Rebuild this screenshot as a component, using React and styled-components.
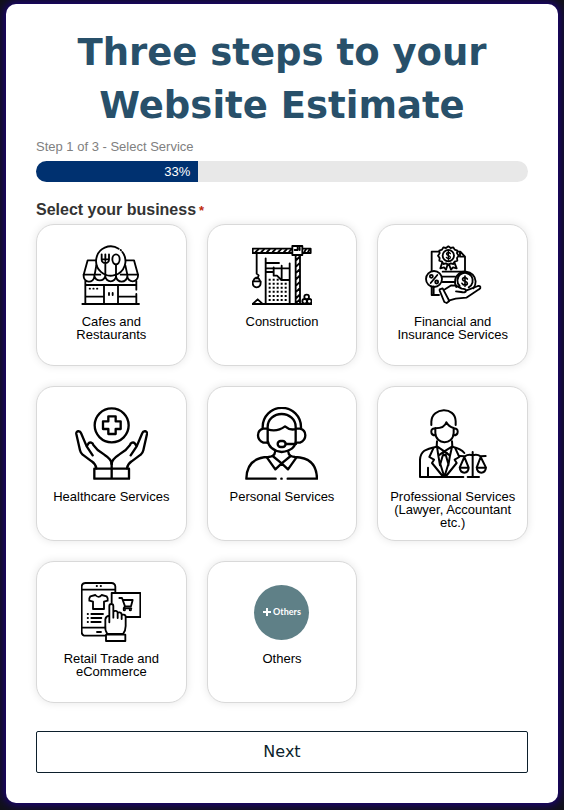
import React, { useState } from "react";
import styled, { createGlobalStyle } from "styled-components";

const GlobalStyle = createGlobalStyle`
  *, *::before, *::after { box-sizing: border-box; }
  body {
    margin: 0;
    background: #111118;
    font-family: "Liberation Sans", Arial, sans-serif;
    font-size: 13px;
    color: #000;
  }
`;

const Page = styled.main`
  display: flow-root;
  padding: 4px 6px 7px;
  overflow: hidden;
`;

const Panel = styled.form`
  padding: 22px 30px 30px;
  border-radius: 10px;
  background: #fff;
  box-shadow: 0 0 10px 2px #1c0080;
`;

const Title = styled.h1`
  margin: 0 0 7px;
  font: bold 37px/53px "DejaVu Sans", Verdana, sans-serif;
  text-align: center;
  color: #28506a;
`;

const StepText = styled.p`
  margin: 0 0 6px;
  line-height: 16px;
  color: #808080;
`;

const Track = styled.div`
  display: flex;
  margin-bottom: 18px;
  border-radius: 11px;
  overflow: hidden;
  background: #e8e8e8;
`;

const Fill = styled.div`
  padding-right: 8px;
  line-height: 21px;
  text-align: right;
  color: #fff;
  background: #003170;
`;

const Fieldset = styled.fieldset`
  margin: 0 0 28px;
  padding: 0;
  border: 0;
  min-width: 0;
`;

const Legend = styled.legend`
  padding: 0 0 3px;
  font-size: 16px;
  line-height: 20px;
  font-weight: bold;
  color: #333;
`;

const Required = styled.span`
  margin-left: 3px;
  font-size: 13px;
  color: #c02b0a;
`;

const Choices = styled.div`
  display: grid;
  grid-template-columns: repeat(3, minmax(0, 1fr));
  gap: 20px;
`;

const Choice = styled.label`
  position: relative;
  display: flex;
  flex-direction: column;
  align-items: center;
  gap: 10px;
  min-height: 142px;
  padding: 20px 10px 11px;
  border: 1px solid #d9d9d9;
  border-radius: 18px;
  background: #fff;
  box-shadow: 0 0 8px rgba(0, 0, 0, 0.1);
  line-height: 13px;
  text-align: center;
  cursor: pointer;
  &:has(:checked) { border-color: #003170; }
  &:has(:focus-visible) { outline: 2px solid #003170; }
`;

const Radio = styled.input`
  position: absolute;
  inset: 0;
  width: 100%;
  height: 100%;
  margin: 0;
  opacity: 0;
  cursor: pointer;
`;

const Drawing = styled.svg`
  flex: none;
  width: ${(p) => p.$size}px;
  height: ${(p) => p.$size}px;
  fill: none;
  stroke: #000;
  stroke-width: ${(p) => p.$stroke};
  stroke-linecap: round;
  stroke-linejoin: round;
`;

const Slot = styled.span`
  display: grid;
  place-items: center;
  height: 60px;
`;

const Disc = styled.span`
  display: flex;
  align-items: center;
  justify-content: center;
  gap: 2px;
  width: 55px;
  height: 55px;
  border-radius: 50%;
  background: #5f8087;
  color: #fff;
  font: bold 9px/12px Lato, sans-serif;
`;

const Plus = styled.svg`
  width: 8px;
  height: 8px;
  stroke: #fff;
  stroke-width: 2;
`;

const Next = styled.button`
  display: block;
  width: 100%;
  padding: 10px;
  border: 1px solid #0c1f2c;
  border-radius: 2px;
  background: #fff;
  color: #0c1f2c;
  font: 16px/20px "DejaVu Sans", Verdana, sans-serif;
  cursor: pointer;
`;

const CafeIcon = () => (
  <Drawing $size={60} $stroke={5.5} viewBox="34 27 180 180" aria-hidden="true">
    <path d="M147 38A44 44 0 1 0 158 48M153 42l1 1" />
    <path d="M79 73H54L42 116M168 73h25l12 43M80 88l-5 28M167 88l6 28M42 116H92M153 116H205" />
    <path d="M42 116v4a16 16 0 0 0 32 2v-5M74 120a17 17 0 0 0 33 0v-5M107 120a16 16 0 0 0 32 0v-5M139 120a17 17 0 0 0 34 0v-4M173 120a16 16 0 0 0 32 0v-4" />
    <path d="M107 116V78M96 55v16a11 10 0 0 0 22 0V55M107 55v18M96 70h22M139 116V86" />
    <ellipse cx="139" cy="70" rx="11" ry="15" />
    <path d="M47 136v67M200 136v25M200 174v29M47 147h153M103 149v54M145 149v54M49 182h52M147 182h51M38 204h170" />
    <path d="M60 158h1M71 158h1M82 158h1M118 171v6M129 171v6" />
  </Drawing>
);

const CraneIcon = () => (
  <Drawing $size={60} $stroke={5.5} viewBox="37 27 180 180" aria-hidden="true">
    <path d="M158 38H39v13h119M188 38h25v13h-25M158 30h30v27h-30zM174 30v12h-9M180 35v7" />
    <path d="M48 48l8-8M65 48l8-8M82 48l8-8M99 48l8-8M116 48l8-8M133 48l8-8M148 48l7-8M194 48l5-8M205 48l5-8" />
    <path d="M51 52v61l6 5-2 6-6 1M40 136l5-9h12l5 9M39 136h24q1 18-12 18t-12-18z" />
    <path d="M78 67v136M150 82v121M78 81h40M78 97h72M80 108h20M102 94v25h10l13 13h25M126 89v42" />
    <path d="M168 58v145M181 58v145M170 72l9-9M170 91l9-9M170 110l9-9M170 129l9-9M170 148l9-9M170 167l9-9M170 186l9-9M170 200l9-8" />
    <path d="M38 204h177M40 203l14-13 14 13" />
    <circle cx="201" cy="183" r="7" />
    <circle cx="195" cy="196" r="7" />
    <circle cx="209" cy="196" r="7" />
    <path strokeWidth="6" strokeLinecap="butt" strokeDasharray="6 6" d="M87 131h30M87 143h56M87 155h56M87 167h56M87 180h56M87 192h56" />
  </Drawing>
);

const FinanceIcon = () => (
  <Drawing $size={60} $stroke={5.5} viewBox="33 27 180 180" aria-hidden="true">
    <path d="M80 47H59v58M59 151v26h22M138 47h7l14 15v41M144 48v14h14M92 107h69M92 122h37M92 138h37M65 151v26" />
    <path d="M109 31l7 5 8-2 4 7 8 3-1 8 5 7-5 7 1 8-8 3-4 7-8-2-7 5-7-5-8 2-4-7-8-3 1-8-5-7 5-7-1-8 8-3 4-7 8 2z" />
    <circle cx="109" cy="59" r="17" />
    <path strokeWidth="4" d="M115 53c-4-6-13-3-11 2s11 3 11 9-10 5-12 0M109 46v27" />
    <path d="M91 79l-6 18 11-3 6 7 5-16M127 79l7 18-11-3-6 7-6-16" />
    <circle cx="66" cy="129" r="24" />
    <path d="M76 117l-20 24" />
    <circle cx="58" cy="121" r="4.5" />
    <circle cx="74" cy="138" r="4.5" />
    <path d="M133 153a31 31 0 1 1 51 4M143 150a23 23 0 1 1 27 4" />
    <path strokeWidth="5" d="M166 129c-5-8-16-4-14 2s14 4 14 11-12 7-16 0M159 120v31" />
    <path d="M83 160l9-3 20 38-8 6-7-3-14-34zM99 160l19-12 14 1 17 9q14 1 13 7t-15 3l-15-2M162 164l36-14c8-2 10 6 3 10l-38 25-32 3-21 6" />
  </Drawing>
);

const HealthIcon = () => (
  <Drawing $size={73} $stroke={7} viewBox="14 21 219 219" aria-hidden="true">
    <circle cx="124" cy="76" r="51" />
    <path d="M114 49h22v15h15v23h-15v15h-22V87H98V64h16z" />
    <path d="M72 206h104v30H72zM124 184v52" />
    <path d="M78 205Q76 192 64 184L37 164Q31 160 29 151L18 102C16 92 29 91 32 99L49 139 67 166M49 139L54 131C58 124 68 129 69 135L82 150 102 164Q124 178 124 192" />
    <path d="M170 205Q172 192 184 184L211 164Q217 160 219 151L230 102C232 92 219 91 216 99L199 139 181 166M199 139L194 131C190 124 180 129 179 135L166 150 146 164Q124 178 124 192" />
  </Drawing>
);

const HeadsetIcon = () => (
  <Drawing $size={73} $stroke={7} viewBox="17 21 219 219" aria-hidden="true">
    <path d="M70 84v-3a57 57 0 0 1 115 0v3M85 129V80a42 38 0 0 1 84 0v42q-1 29-42 34-38-5-42-34M85 88q28 9 52-9 15 13 32 8" />
    <path d="M82 86H72q-16 4-16 20t16 22h11M171 86h11q16 4 16 20t-16 22h-11M139 132h31" />
    <rect x="115" y="123" width="24" height="18" rx="9" />
    <path d="M21 236c1-44 25-64 66-65q19-1 20-15M233 236c-1-44-25-64-66-65q-19-1-20-15M21 236h88M145 236h88M126 236h1" />
    <path d="M100 168l27 22-19 18-25-35M154 168l-27 22 19 18 25-35" />
  </Drawing>
);

const LawyerIcon = () => (
  <Drawing $size={73} $stroke={6} viewBox="13 19 219 219" aria-hidden="true">
    <path d="M59 73V63c2-44 72-47 73-1v11M71 82v15c1 36 53 38 55 0V82M71 83c17 0 30-7 33-18q7 13 22 17" />
    <path d="M70 84c-15-3-15 20 1 20M127 84c15-3 15 20-1 20M76 122l-1 15M121 122l1 15" />
    <path d="M25 229v-52c2-26 16-32 50-39M122 138c18 4 28 8 36 19M25 229h130M49 201v28M168 229h34" />
    <path d="M65 143l-12 26 14 8-6 10 34 42M131 143l12 26-14 8 6 10-34 42M76 138l4 27 18-13 17 13 6-27M76 137l22 15 24-15M92 157l6 7 8-7M93 165l-7 25 12 39 12-39-7-25M80 165l5 29M115 165l-5 29" />
    <path d="M183 154v75M144 166l15 1q12-8 24-3 13-5 24 3l15-1M158 169l-14 32h27zM207 169l-12 32h28zM144 201q2 15 14 15t13-15M195 201q2 15 14 15t14-15" />
  </Drawing>
);

const ShopIcon = () => (
  <Drawing $size={60} $stroke={5.5} viewBox="34 30 180 180" aria-hidden="true">
    <path d="M137 61V44q-1-11-12-11H48q-12 0-12 12v134q0 12 12 12h58M38 53h98M38 167h67M81 42h1M93 42h1M82 180h12" />
    <path d="M77 69L62 73Q57 79 59 86L70 89V111H103V89L114 86Q116 79 111 73L96 69Q87 80 77 69Z" />
    <path d="M54 126h1M65 126h35M54 138h1M65 138h30M54 150h1M65 150h28" />
    <path d="M126 92V63h86v72h-42" />
    <path d="M149 78H157L166 103H184L189 84H160M166 103L162 109H185" />
    <circle cx="164" cy="113" r="2" />
    <circle cx="182" cy="113" r="2" />
    <path d="M119 151v-49c0-8 12-8 12 0v35-15c0-8 13-6 13 1v15-12c0-8 12-6 12 2v13-9c0-7 12-5 12 2v28q0 14-8 24h-47q-8-13-6-27v-17q1-9 12-11M109 188h58v19h-58z" />
  </Drawing>
);

const OthersIcon = () => (
  <Slot aria-hidden="true">
    <Disc>
      <Plus viewBox="0 0 8 8"><path d="M0 4h8M4 0v8" /></Plus>
      Others
    </Disc>
  </Slot>
);

const services = [
  ["Cafes and Restaurants", CafeIcon],
  ["Construction", CraneIcon],
  ["Financial and Insurance Services", FinanceIcon],
  ["Healthcare Services", HealthIcon],
  ["Personal Services", HeadsetIcon],
  ["Professional Services (Lawyer, Accountant etc.)", LawyerIcon],
  ["Retail Trade and eCommerce", ShopIcon],
  ["Others", OthersIcon],
];

export default function App() {
  const [selected, setSelected] = useState("");
  const progress = 33;
  return (
    <>
      <GlobalStyle />
      <Page>
        <Panel onSubmit={(e) => e.preventDefault()}>
          <Title>Three steps to your Website Estimate</Title>
          <StepText>Step 1 of 3 - Select Service</StepText>
          <Track role="progressbar" aria-label="Step 1 of 3" aria-valuenow={progress} aria-valuemin={0} aria-valuemax={100}>
            <Fill style={{ width: `${progress}%` }}>{progress}%</Fill>
          </Track>
          <Fieldset>
            <Legend>
              Select your business<Required>*</Required>
            </Legend>
            <Choices>
              {services.map(([name, Icon]) => (
                <Choice key={name}>
                  <Radio
                    type="radio"
                    name="business"
                    value={name}
                    checked={selected === name}
                    onChange={() => setSelected(name)}
                  />
                  <Icon />
                  <span>{name}</span>
                </Choice>
              ))}
            </Choices>
          </Fieldset>
          <Next type="submit">Next</Next>
        </Panel>
      </Page>
    </>
  );
}
